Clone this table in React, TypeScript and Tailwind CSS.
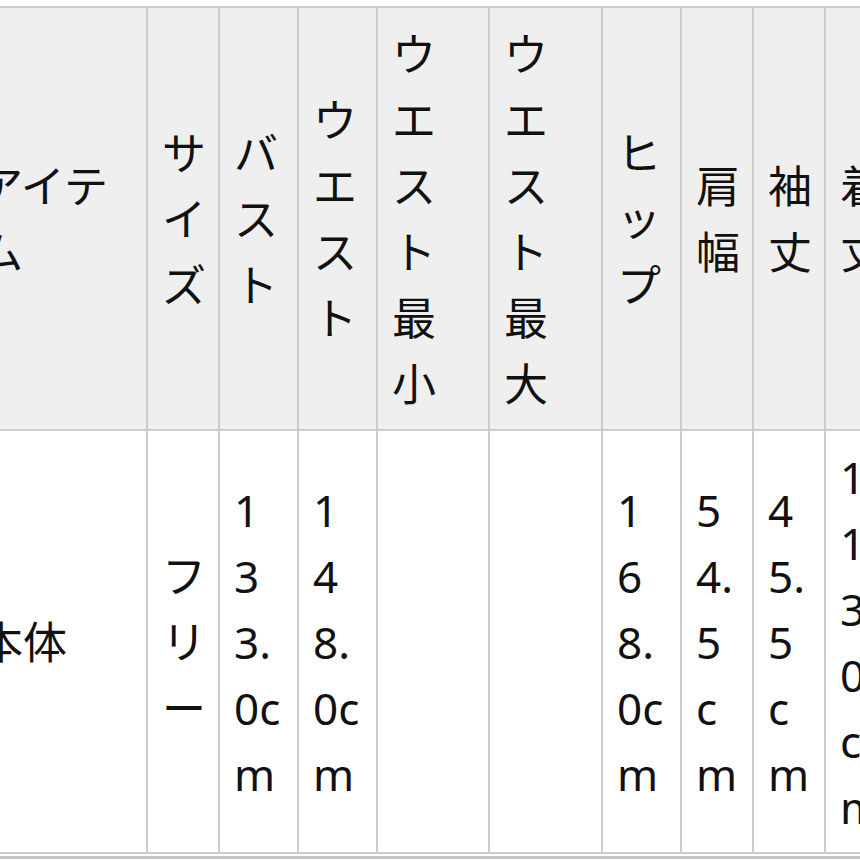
import React from 'react';

type Column = {
  label: string;
  value: string;
  width: string;
};

const columns: Column[] = [
  { label: 'アイテム', value: '本体', width: 'w-[183px]' },
  { label: 'サイズ', value: 'フリー', width: 'w-[72px]' },
  { label: 'バスト', value: '133.0cm', width: 'w-[79px]' },
  { label: 'ウエスト', value: '148.0cm', width: 'w-[79px]' },
  { label: 'ウエスト最小', value: '', width: 'w-[112px]' },
  { label: 'ウエスト最大', value: '', width: 'w-[113px]' },
  { label: 'ヒップ', value: '168.0cm', width: 'w-[79px]' },
  { label: '肩幅', value: '54.5cm', width: 'w-[72px]' },
  { label: '袖丈', value: '45.5cm', width: 'w-[72px]' },
  { label: '着丈', value: '113.0cm', width: 'w-[72px]' },
];

const cell =
  'border-2 border-[#cccccc] px-[14px] pt-[13px] pb-3 text-left align-middle font-normal break-all';

const App: React.FC = () => {
  return (
    <div className="w-[860px] h-[860px] overflow-hidden bg-white pt-[6px] font-['Noto_Sans','Noto_Sans_CJK_JP',sans-serif] text-[44px] leading-[66px] text-[#111111]">
      <div className="-ml-[37px]">
        <table className="table-fixed border-collapse w-[933px]">
          <colgroup>
            {columns.map((c) => (
              <col key={c.label} className={c.width} />
            ))}
          </colgroup>
          <thead>
            <tr className="bg-[#efefef]">
              {columns.map((c) => (
                <th key={c.label} className={cell}>
                  {c.label}
                </th>
              ))}
            </tr>
          </thead>
          <tbody>
            <tr className="bg-white">
              {columns.map((c) => (
                <td key={c.label} className={cell}>
                  {c.value}
                </td>
              ))}
            </tr>
          </tbody>
        </table>
        {/* next row peeking in at the bottom */}
        <div className="mt-[2px] border-t-[3px] border-[#c4c4c4] w-[933px]" />
      </div>
    </div>
  );
};

export default App;
